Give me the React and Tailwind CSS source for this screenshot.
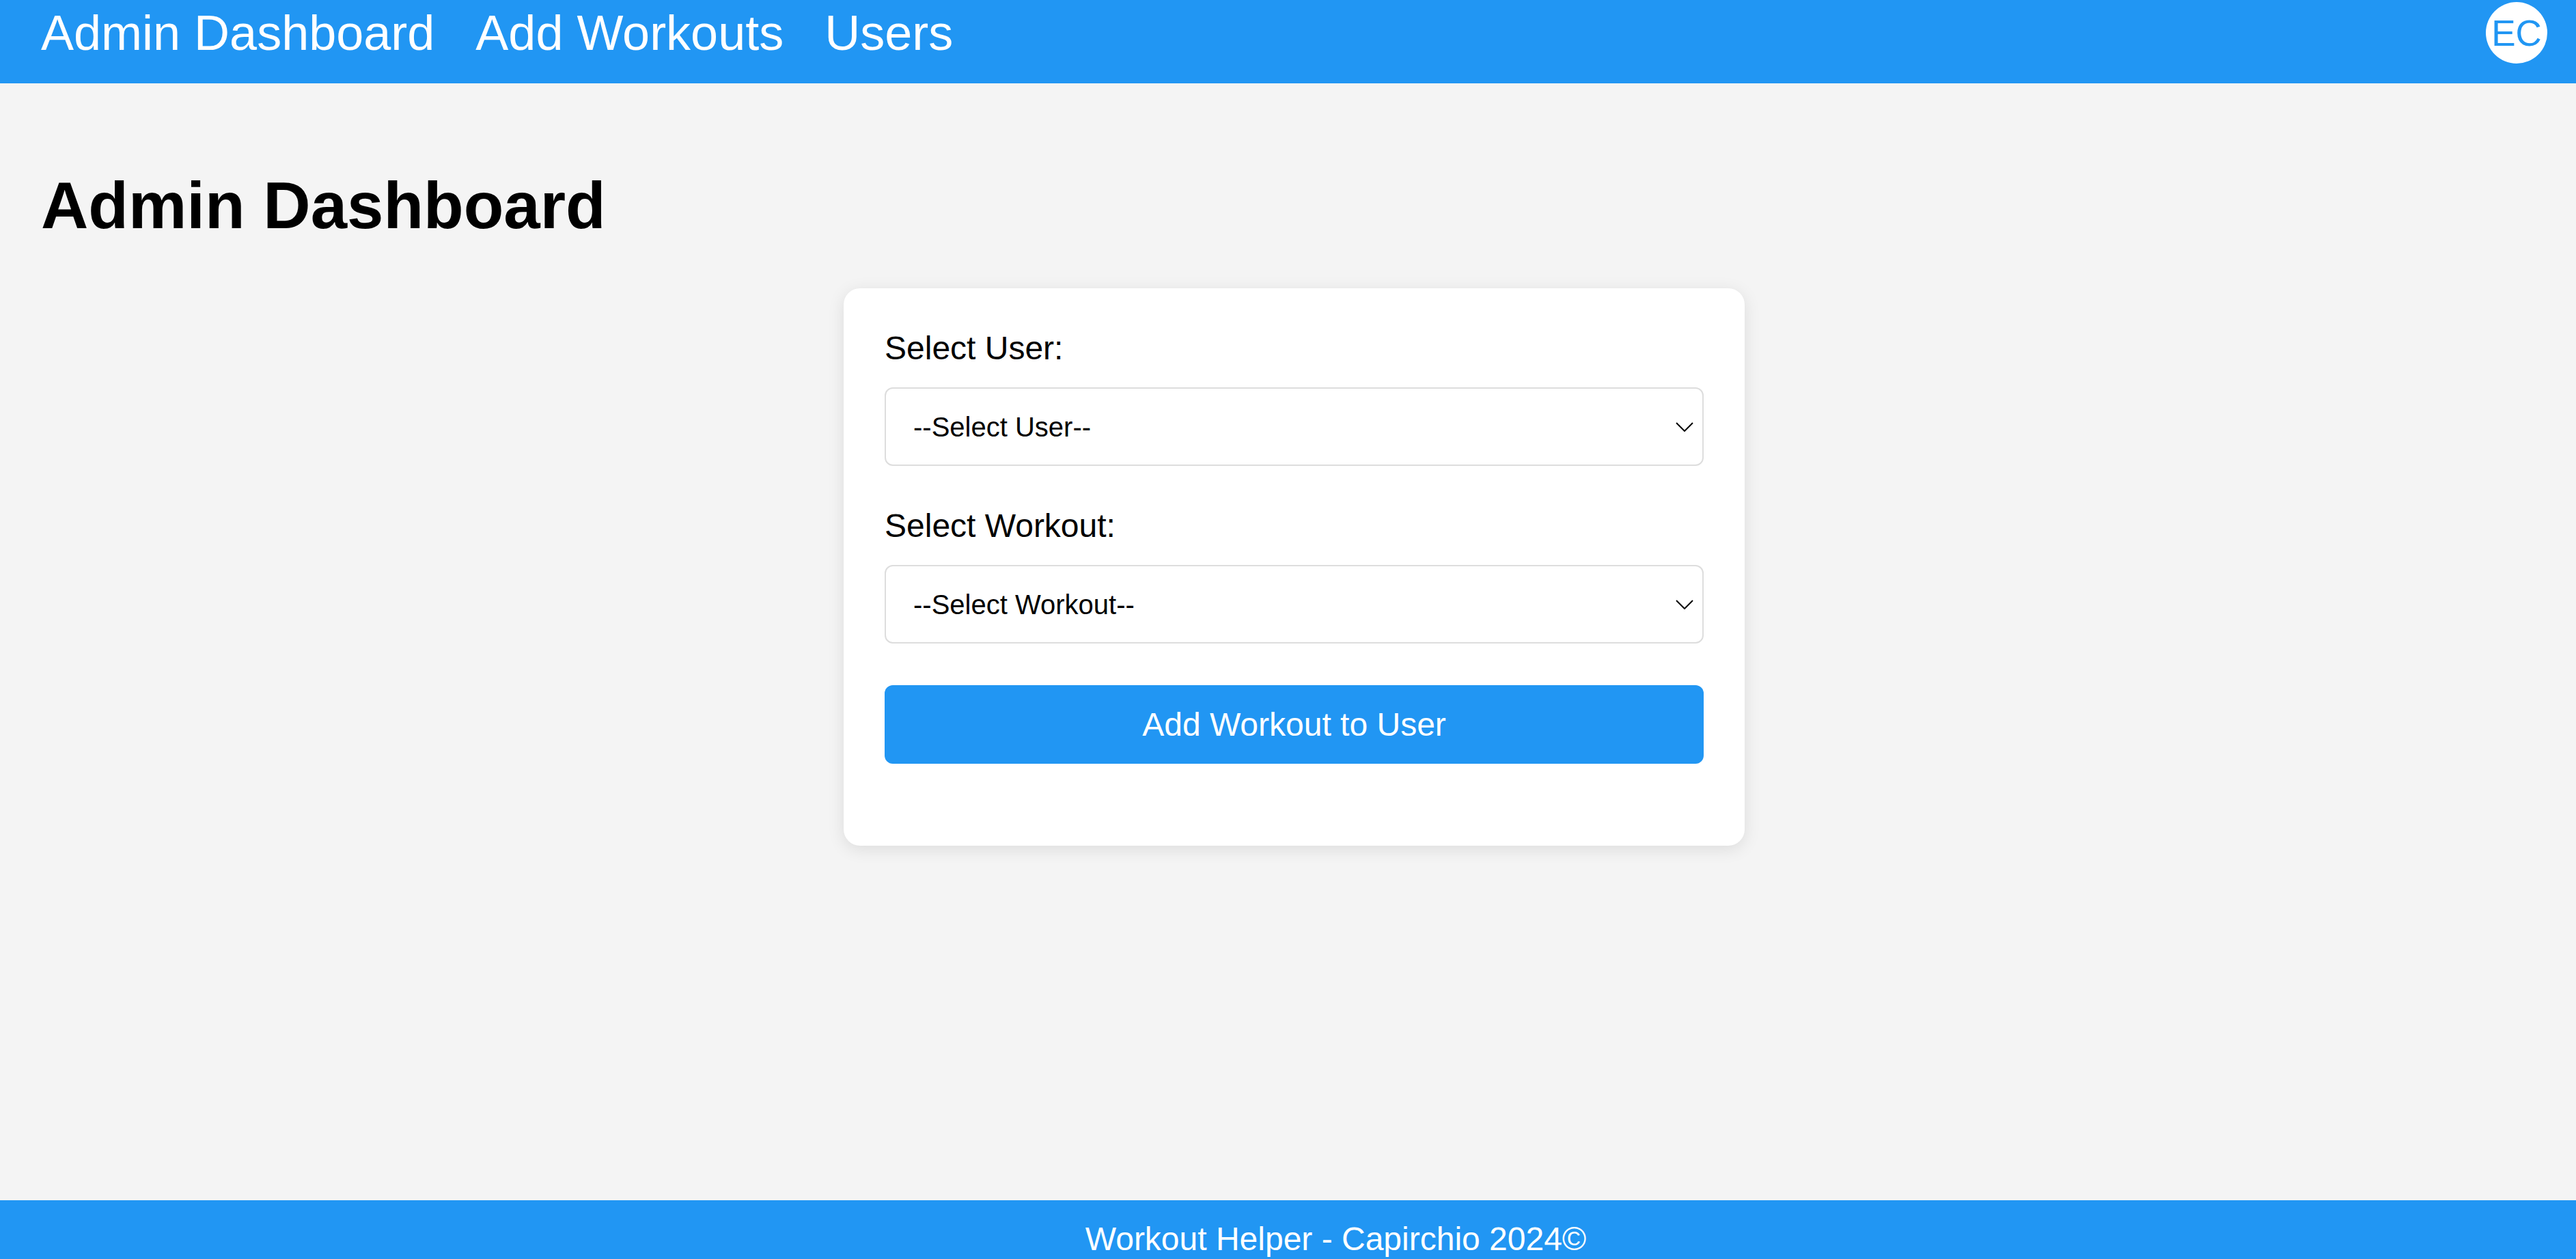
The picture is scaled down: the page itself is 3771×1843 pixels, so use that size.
import React, { useState } from 'react';

const FONT = "font-['Liberation_Sans',Arial,Helvetica,sans-serif]";

const Chevron = () => (
  <svg
    className="pointer-events-none absolute right-[15px] top-1/2 -translate-y-1/2 w-[26px] h-[14px] text-black"
    viewBox="0 0 26 14" fill="none" stroke="currentColor"
  >
    <path strokeWidth={2} d="M1 1l12 12L25 1" />
  </svg>
);

const SelectField = ({ label, placeholder, value, onChange, options, className = '' }) => (
  <div className={className}>
    <label className="block text-[48px] leading-[55px] text-black">{label}</label>
    <div className="relative mt-[30px] h-[115px]">
      <select
        value={value}
        onChange={e => onChange(e.target.value)}
        className="appearance-none w-full h-full bg-white border-2 border-[#dddddd] rounded-[12px] pl-[40px] pr-[60px] text-[40px] text-black outline-none"
      >
        <option value="">{placeholder}</option>
        {options.map(o => (
          <option key={o} value={o}>{o}</option>
        ))}
      </select>
      <Chevron />
    </div>
  </div>
);

const App = () => {
  const [user, setUser] = useState('');
  const [workout, setWorkout] = useState('');

  return (
    <div className={`min-h-screen flex flex-col bg-[#f4f4f4] ${FONT}`}>
      <nav className="h-[122px] bg-[#2196f3] pl-[60px] pr-[42px] shrink-0">
        <div className="h-[96px] flex items-center justify-between">
          <div className="flex items-center gap-[60px] text-[72px] leading-[83px] text-white">
            <a href="#">Admin Dashboard</a>
            <a href="#">Add Workouts</a>
            <a href="#">Users</a>
          </div>
          <div className="w-[90px] h-[90px] rounded-full bg-white text-[#2196f3] text-[53px] leading-none flex items-center justify-center">
            EC
          </div>
        </div>
      </nav>

      <main className="flex-1 pt-[124px] px-[60px]">
        <h1 className="text-[96px] leading-[110px] font-bold text-black">Admin Dashboard</h1>

        <div className="mt-[66px] pl-[18px]">
          <div className="w-[1319px] mx-auto bg-white rounded-[24px] shadow-[0_5px_24px_rgba(0,0,0,0.1)] px-[60px] pt-[60px] pb-[120px]">
            <SelectField
              label="Select User:"
              placeholder="--Select User--"
              value={user}
              onChange={setUser}
              options={[]}
            />
            <SelectField
              className="mt-[60px]"
              label="Select Workout:"
              placeholder="--Select Workout--"
              value={workout}
              onChange={setWorkout}
              options={[]}
            />
            <button className="mt-[61px] w-full h-[115px] bg-[#2196f3] rounded-[12px] text-white text-[48px] leading-[55px]">
              Add Workout to User
            </button>
          </div>
        </div>
      </main>

      <footer className="h-[86px] shrink-0 bg-[#2196f3] pt-[29px] pl-[140px] text-center text-white text-[48px] leading-[55px] overflow-hidden">
        Workout Helper - Capirchio 2024©
      </footer>
    </div>
  );
};

export default App;
